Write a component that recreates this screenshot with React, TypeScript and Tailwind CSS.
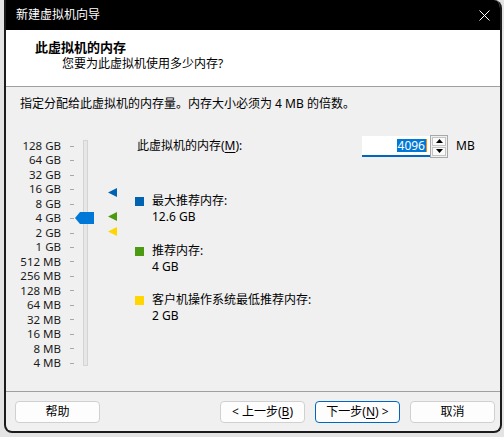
export default function App() {
  const sizes = [
    "128 GB", "64 GB", "32 GB", "16 GB", "8 GB", "4 GB", "2 GB", "1 GB",
    "512 MB", "256 MB", "128 MB", "64 MB", "32 MB", "16 MB", "8 MB", "4 MB",
  ];

  const font = { fontFamily: '"Noto Sans", "Noto Sans CJK SC", sans-serif' };

  return (
    <div className="w-[504px] h-[437px] bg-[#e4e4e4] overflow-hidden text-[12px] text-black" style={font}>
      <div className="ml-[4px] w-[498px] h-[433px] border-2 border-t-0 border-[#1c1c1c] rounded-b-[8px] rounded-tr-[8px] overflow-hidden flex flex-col bg-[#f0f0f0]">
        {/* title bar */}
        <div className="h-[30px] bg-black text-white flex items-center pl-[10px] pr-[6px] shrink-0">
          <span className="leading-[16px]">新建虚拟机向导</span>
          <svg className="ml-auto mr-[4px]" width="11" height="11" viewBox="0 0 11 11">
            <path d="M0.5 0.5 L10.5 10.5 M10.5 0.5 L0.5 10.5" stroke="#ffffff" strokeWidth="1" />
          </svg>
        </div>

        {/* header */}
        <div className="h-[57px] bg-white pt-[9px] shrink-0 border-b border-[#a0a0a0]">
          <div className="pl-[29px] leading-[16px] font-bold text-[13px]">此虚拟机的内存</div>
          <div className="pl-[56px] leading-[16px] mt-px">您要为此虚拟机使用多少内存?</div>
        </div>

        {/* body */}
        <div className="h-[304px] shrink-0 flex flex-col">
          <p className="mt-[9px] ml-[14px] leading-[16px]">指定分配给此虚拟机的内存量。内存大小必须为 4 MB 的倍数。</p>

          <div className="mt-[23px] flex">
            {/* size labels */}
            <div className="w-[55px] pt-[4px] flex flex-col items-end text-[11.5px] text-[#1a1a1a]">
              {sizes.map((s) => (
                <div key={s} className="h-[14.47px] leading-[14.47px] whitespace-nowrap">{s}</div>
              ))}
            </div>
            {/* ticks */}
            <div className="ml-[9px] w-[4px] pt-[4px] flex flex-col">
              {sizes.map((s) => (
                <div key={s} className="h-[14.47px] flex items-center">
                  <div className="w-[4px] h-px bg-[#a8a8a8]" />
                </div>
              ))}
            </div>
            {/* track */}
            <div className="ml-[9px] mt-[5px] w-[5px] h-[226px] bg-[#e7e7e7] border border-[#d4d4d4] relative">
              <svg className="absolute left-[-9px] top-[71px]" width="19" height="12" viewBox="0 0 19 12">
                <polygon points="0,6 5,0 19,0 19,12 5,12" fill="#0078d7" />
              </svg>
            </div>
            {/* markers */}
            <div className="ml-[20px] w-[9px] relative">
              <svg className="absolute top-[53px] left-0" width="9" height="9" viewBox="0 0 9 9">
                <polygon points="0,4.5 9,0 9,9" fill="#0063b1" />
              </svg>
              <svg className="absolute top-[77px] left-0" width="9" height="9" viewBox="0 0 9 9">
                <polygon points="0,4.5 9,0 9,9" fill="#4c9a12" />
              </svg>
              <svg className="absolute top-[92px] left-0" width="9" height="9" viewBox="0 0 9 9">
                <polygon points="0,4.5 9,0 9,9" fill="#ffd600" />
              </svg>
            </div>

            {/* right side */}
            <div className="ml-[18px] flex flex-col">
              <div className="h-[22px] flex items-center">
                <div className="w-[227px] pl-[2px] leading-[16px]">
                  此虚拟机的内存(<span className="underline underline-offset-2">M</span>):
                </div>
                <div className="w-[68px] h-[21px] bg-white border-b-2 border-[#0067c0] flex items-center justify-end pr-[3px]">
                  <span className="bg-[#0078d7] text-white leading-[13px] px-px">4096</span>
                  <span className="w-px h-[13px] bg-[#ff8c00]" />
                </div>
                <div className="w-[18px] h-[23px] border border-[#a8a8a8] flex flex-col p-px gap-px bg-[#f0f0f0]">
                  <div className="flex-1 border border-[#c4c4c4] bg-[#fafafa] flex items-center justify-center">
                    <svg width="7" height="4" viewBox="0 0 7 4"><polygon points="3.5,0 7,4 0,4" fill="#000" /></svg>
                  </div>
                  <div className="flex-1 border border-[#c4c4c4] bg-[#fafafa] flex items-center justify-center">
                    <svg width="7" height="4" viewBox="0 0 7 4"><polygon points="0,0 7,0 3.5,4" fill="#000" /></svg>
                  </div>
                </div>
                <div className="ml-[8px] leading-[16px]">MB</div>
              </div>

              <div className="mt-[36px] flex gap-[8px]">
                <div className="w-[9px] h-[9px] mt-[4px] bg-[#0063b1]" />
                <div className="leading-[16px]">
                  <div>最大推荐内存:</div>
                  <div>12.6 GB</div>
                </div>
              </div>
              <div className="mt-[18px] flex gap-[8px]">
                <div className="w-[9px] h-[9px] mt-[4px] bg-[#4c9a12]" />
                <div className="leading-[16px]">
                  <div>推荐内存:</div>
                  <div>4 GB</div>
                </div>
              </div>
              <div className="mt-[17px] flex gap-[8px]">
                <div className="w-[9px] h-[9px] mt-[4px] bg-[#ffd600]" />
                <div className="leading-[16px]">
                  <div>客户机操作系统最低推荐内存:</div>
                  <div>2 GB</div>
                </div>
              </div>
            </div>
          </div>
        </div>

        {/* footer */}
        <div className="flex-1 border-t border-[#a0a0a0] pt-[9px] pl-[9px] pr-[5px] flex">
          <button className="w-[85px] h-[22px] rounded-[4px] border border-[#d0d0d0] bg-[#fdfdfd] leading-[16px]">帮助</button>
          <button className="ml-auto w-[85px] h-[22px] rounded-[4px] border border-[#d0d0d0] bg-[#fdfdfd] leading-[16px]">
            &lt; 上一步(<span className="underline underline-offset-2">B</span>)
          </button>
          <button className="ml-[10px] w-[85px] h-[22px] rounded-[4px] border border-[#0067c0] bg-[#fdfdfd] leading-[16px]">
            下一步(<span className="underline underline-offset-2">N</span>) &gt;
          </button>
          <button className="ml-[10px] w-[85px] h-[22px] rounded-[4px] border border-[#d0d0d0] bg-[#fdfdfd] leading-[16px]">取消</button>
        </div>
      </div>
    </div>
  );
}
